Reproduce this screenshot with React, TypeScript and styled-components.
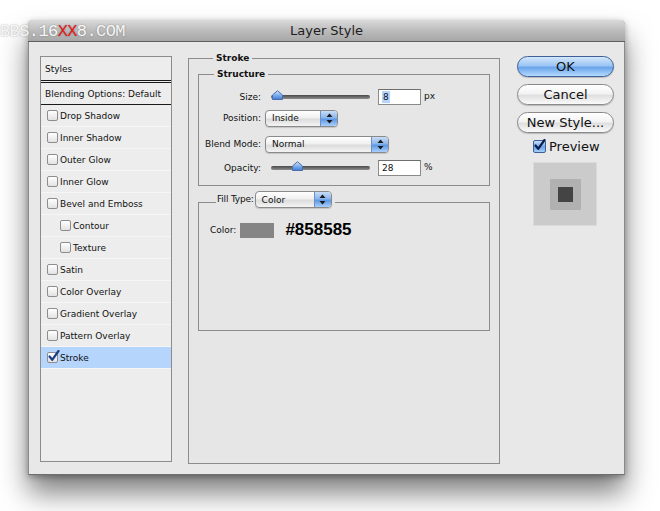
import React from 'react'
import styled, { createGlobalStyle } from 'styled-components'

const UI_FONT = `'Lucida Grande', 'DejaVu Sans', 'Liberation Sans', sans-serif`

const GlobalStyle = createGlobalStyle`
  html, body {
    margin: 0;
    padding: 0;
    background: #ffffff;
  }
  body {
    font-family: ${UI_FONT};
    color: #111;
  }
`

const LIST_ITEMS = [
  { label: 'Drop Shadow' },
  { label: 'Inner Shadow' },
  { label: 'Outer Glow' },
  { label: 'Inner Glow' },
  { label: 'Bevel and Emboss' },
  { label: 'Contour', indent: true },
  { label: 'Texture', indent: true },
  { label: 'Satin' },
  { label: 'Color Overlay' },
  { label: 'Gradient Overlay' },
  { label: 'Pattern Overlay' },
  { label: 'Stroke', checked: true, selected: true },
]

const CheckMark = ({ color = '#1c3d86' }: { color?: string }) => (
  <svg width="13" height="13" viewBox="0 0 13 13">
    <path d="M2.5 6.5 L5.2 9.8 L11.5 1" fill="none" stroke={color} strokeWidth="2.2" strokeLinecap="round" strokeLinejoin="round" />
  </svg>
)

const SmallCheck = ({ checked }: { checked?: boolean }) => (
  <Box>
    {checked && <CheckMark />}
  </Box>
)

const SliderThumb = () => (
  <svg width="11" height="10" viewBox="0 0 11 10">
    <defs>
      <linearGradient id="thumbGrad" x1="0" y1="0" x2="0" y2="1">
        <stop offset="0" stopColor="#d5e6fb" />
        <stop offset="0.5" stopColor="#7fb0ee" />
        <stop offset="1" stopColor="#3f7bd6" />
      </linearGradient>
    </defs>
    <path d="M0.5 5 L5.5 0.7 L10.5 5 L10.5 9.5 L0.5 9.5 Z" fill="url(#thumbGrad)" stroke="#4a6ea8" strokeWidth="1" />
  </svg>
)

// thumb offset comes from the value, so it stays inline
const Slider = ({ value }: { value: number }) => (
  <SliderTrack>
    <ThumbHolder style={{ left: `${value}px` }}>
      <SliderThumb />
    </ThumbHolder>
  </SliderTrack>
)

const Arrows = () => (
  <svg width="7" height="11" viewBox="0 0 7 11">
    <path d="M3.5 0.5 L6.5 4 L0.5 4 Z" fill="#1a1a1a" />
    <path d="M3.5 10.5 L6.5 7 L0.5 7 Z" fill="#1a1a1a" />
  </svg>
)

const PopUp = ({ value, width }: { value: string, width: number }) => (
  <PopUpBox $width={width}>
    <PopUpText>{value}</PopUpText>
    <PopUpArrows><Arrows /></PopUpArrows>
  </PopUpBox>
)

export default function App() {
  return (
    <>
      <GlobalStyle />
      <Page>
        <Watermark>
          BBS.16<Red>XX</Red>8.COM
        </Watermark>
        <Window>
          <TitleBar>Layer Style</TitleBar>
          <Body>
            <StyleList>
              <ListHeader>Styles</ListHeader>
              <ListBlending>Blending Options: Default</ListBlending>
              {LIST_ITEMS.map(item => (
                <ListRow key={item.label} $indent={!!item.indent} $selected={!!item.selected}>
                  <SmallCheck checked={item.checked} />
                  <span>{item.label}</span>
                </ListRow>
              ))}
            </StyleList>

            <StrokeGroup>
              <Legend>Stroke</Legend>
              <StructureGroup>
                <Legend>Structure</Legend>
                <FieldRow>
                  <Label>Size:</Label>
                  <Slider value={1} />
                  <NumberField><Selected>8</Selected></NumberField>
                  <Unit>px</Unit>
                </FieldRow>
                <FieldRow $gap={5}>
                  <Label>Position:</Label>
                  <PopUp value="Inside" width={73} />
                </FieldRow>
                <FieldRow $gap={10}>
                  <Label>Blend Mode:</Label>
                  <PopUp value="Normal" width={124} />
                </FieldRow>
                <FieldRow $gap={8}>
                  <Label>Opacity:</Label>
                  <Slider value={21} />
                  <NumberField>28</NumberField>
                  <Unit>%</Unit>
                </FieldRow>
              </StructureGroup>

              <FillGroup>
                <FillLegend>
                  <FillLabel>Fill Type:</FillLabel>
                  <PopUp value="Color" width={77} />
                </FillLegend>
                <ColorRow>
                  <span>Color:</span>
                  <Swatch />
                  <HexValue>#858585</HexValue>
                </ColorRow>
              </FillGroup>
            </StrokeGroup>

            <SideColumn>
              <AquaButton $primary>OK</AquaButton>
              <AquaButton>Cancel</AquaButton>
              <AquaButton>New Style...</AquaButton>
              <PreviewToggle>
                <PreviewBox><CheckMark color="#0c1f4a" /></PreviewBox>
                <span>Preview</span>
              </PreviewToggle>
              <PreviewWell>
                <PreviewMid>
                  <PreviewCore />
                </PreviewMid>
              </PreviewWell>
            </SideColumn>
          </Body>
        </Window>
      </Page>
    </>
  )
}

const Page = styled.div`
  position: relative;
  width: 660px;
  height: 511px;
  padding: 20px 0 0 28px;
  box-sizing: border-box;
  overflow: hidden;
`
const Watermark = styled.div`
  position: absolute;
  left: 0;
  top: 22px;
  z-index: 5;
  font-family: 'Liberation Mono', monospace;
  font-size: 17px;
  letter-spacing: -0.6px;
  color: #f6f6f6;
  text-shadow: 0 0 2px rgba(0, 0, 0, 0.35);
`
const Red = styled.span`
  color: #e5191b;
`
const Window = styled.div`
  width: 597px;
  height: 455px;
  display: flex;
  flex-direction: column;
  background: #e8e8e8;
  border-radius: 5px 5px 0 0;
  box-shadow: 0 18px 28px rgba(0, 0, 0, 0.5), 0 2px 6px rgba(0, 0, 0, 0.3);
  border: 1px solid #8a8a8a;
  border-top: none;
  border-bottom-color: #6e6e6e;
  box-sizing: border-box;
`
const TitleBar = styled.div`
  height: 22px;
  flex: none;
  display: flex;
  align-items: center;
  justify-content: center;
  margin: 0 -1px;
  border-radius: 5px 5px 0 0;
  background: linear-gradient(#dadada, #bcbcbc 50%, #a7a7a7);
  border-bottom: 1px solid #5f5f5f;
  box-sizing: border-box;
  font-size: 13px;
  color: #1e1e1e;
`
const Body = styled.div`
  flex: 1;
  display: flex;
  align-items: flex-start;
  padding: 10px 10px 0 11px;
`
const StyleList = styled.div`
  width: 132px;
  height: 406px;
  margin-top: 4px;
  box-sizing: border-box;
  border: 1px solid #8c8c8c;
  background: #ededed;
  font-size: 9px;
  flex: none;
`
const ListHeader = styled.div`
  height: 26px;
  padding-left: 4px;
  display: flex;
  align-items: center;
  border-bottom: 3px double #1a1a1a;
  box-sizing: border-box;
`
const ListBlending = styled.div`
  height: 22px;
  padding-left: 4px;
  display: flex;
  align-items: center;
  border-bottom: 1px solid #1a1a1a;
  box-sizing: border-box;
`
const ListRow = styled.div<{ $indent: boolean, $selected: boolean }>`
  height: 22px;
  display: flex;
  align-items: center;
  gap: 2px;
  padding-left: ${({ $indent }) => $indent ? '19px' : '6px'};
  border-bottom: 1px solid #f6f6f6;
  box-sizing: border-box;
  background: ${({ $selected }) => $selected ? '#b5d5fd' : 'transparent'};
`
const Box = styled.span`
  position: relative;
  width: 11px;
  height: 11px;
  box-sizing: border-box;
  border: 1px solid #8d8d8d;
  border-radius: 2px;
  background: linear-gradient(#ffffff, #e2e2e2);
  flex: none;
  svg {
    position: absolute;
    left: -1px;
    top: -3px;
  }
`
const StrokeGroup = styled.fieldset`
  width: 312px;
  height: 412px;
  margin: 0 0 0 16px;
  padding: 0 9px;
  box-sizing: border-box;
  border: 1px solid #8c8c8c;
  background: #e6e6e6;
  font-size: 9px;
  flex: none;
`
const Legend = styled.legend`
  margin-left: 15px;
  padding: 0 3px;
  font-weight: bold;
  font-size: 9px;
  line-height: 12px;
`
const StructureGroup = styled.fieldset`
  margin: 4px 0 0;
  padding: 9px 0 9px;
  border: 1px solid #8c8c8c;
  height: 118px;
  box-sizing: border-box;
`
const FieldRow = styled.div<{ $gap?: number }>`
  height: 16px;
  margin-top: ${({ $gap }) => $gap || 0}px;
  display: flex;
  align-items: center;
`
const Label = styled.span`
  width: 62px;
  text-align: right;
  margin-right: 4px;
  flex: none;
`
const SliderTrack = styled.div`
  position: relative;
  width: 99px;
  height: 4px;
  margin-left: 6px;
  border-radius: 2px;
  background: linear-gradient(#4a4a4a, #8d8d8d);
`
const ThumbHolder = styled.div`
  position: absolute;
  top: -5px;
  line-height: 0;
`
const NumberField = styled.div`
  width: 43px;
  height: 16px;
  margin-left: 8px;
  box-sizing: border-box;
  border: 1px solid #8a8a8a;
  border-top-color: #6e6e6e;
  background: #ffffff;
  padding-left: 3px;
  display: flex;
  align-items: center;
  font-size: 9px;
`
const Selected = styled.span`
  background: #b5d5fd;
  padding: 1px 1px;
`
const Unit = styled.span`
  margin-left: 3px;
  margin-top: -2px;
`
const PopUpBox = styled.div<{ $width: number }>`
  width: ${({ $width }) => $width}px;
  height: 17px;
  box-sizing: border-box;
  display: flex;
  border: 1px solid #8a8a8a;
  border-radius: 4px;
  overflow: hidden;
  background: linear-gradient(#ffffff, #f0f0f0 45%, #dcdcdc 55%, #f4f4f4);
  box-shadow: 0 1px 1px rgba(0, 0, 0, 0.15);
`
const PopUpText = styled.span`
  flex: 1;
  display: flex;
  align-items: center;
  padding-left: 6px;
  font-size: 9px;
  font-weight: normal;
`
const PopUpArrows = styled.span`
  width: 16px;
  display: flex;
  align-items: center;
  justify-content: center;
  border-left: 1px solid #6d8fc4;
  background: linear-gradient(#c8ddf6, #8bb6ec 45%, #5d97e4 55%, #a9d0fb);
`
const FillGroup = styled.fieldset`
  margin: 5px 0 0;
  padding: 8px 11px 0;
  border: 1px solid #8c8c8c;
  height: 140px;
  box-sizing: border-box;
`
const FillLegend = styled.legend`
  margin-left: 6px;
  padding: 0 3px 6px 1px;
  display: flex;
  align-items: flex-start;
  gap: 1px;
  font-size: 9px;
`
const FillLabel = styled.span`
  line-height: 17px;
  letter-spacing: -0.2px;
`
const ColorRow = styled.div`
  display: flex;
  align-items: center;
  height: 16px;
`
const Swatch = styled.span`
  width: 34px;
  height: 15px;
  margin-left: 4px;
  background: #858585;
`
const HexValue = styled.span`
  margin-left: 11px;
  font-family: 'Liberation Sans', Arial, sans-serif;
  font-weight: bold;
  font-size: 17px;
  color: #000;
`
const SideColumn = styled.div`
  width: 97px;
  margin-left: 17px;
  padding-top: 4px;
  display: flex;
  flex-direction: column;
  gap: 7px;
  flex: none;
`
const AquaButton = styled.button<{ $primary?: boolean }>`
  width: 97px;
  height: 21px;
  padding: 0;
  border-radius: 11px;
  font-family: ${UI_FONT};
  font-size: 13px;
  color: #111;
  border: 1px solid ${({ $primary }) => $primary ? '#3e5f98' : '#8a8a8a'};
  background: ${({ $primary }) => $primary
    ? 'linear-gradient(#d3e6fb, #9cc6f3 45%, #6ba5ec 55%, #b4dafd)'
    : 'linear-gradient(#ffffff, #f3f3f3 45%, #e0e0e0 55%, #fafafa)'};
  box-shadow: 0 1px 1px rgba(0, 0, 0, 0.2);
`
const PreviewToggle = styled.div`
  display: flex;
  align-items: center;
  gap: 3px;
  padding-left: 16px;
  height: 13px;
  font-size: 13px;
`
const PreviewBox = styled.span`
  position: relative;
  width: 13px;
  height: 13px;
  box-sizing: border-box;
  border: 1px solid #3e5f98;
  border-radius: 2px;
  background: linear-gradient(#c9e0fa, #6aa4ea 55%, #a6cffb);
  flex: none;
  svg {
    position: absolute;
    left: -1px;
    top: -2px;
  }
`
const PreviewWell = styled.div`
  width: 64px;
  height: 64px;
  margin: 2px 0 0 16px;
  box-sizing: border-box;
  border: 1px solid #dadada;
  background: #cbcbcb;
  display: flex;
  align-items: center;
  justify-content: center;
`
const PreviewMid = styled.div`
  width: 31px;
  height: 31px;
  background: #b1b1b1;
  display: flex;
  align-items: center;
  justify-content: center;
`
const PreviewCore = styled.div`
  width: 15px;
  height: 15px;
  background: #444444;
`
